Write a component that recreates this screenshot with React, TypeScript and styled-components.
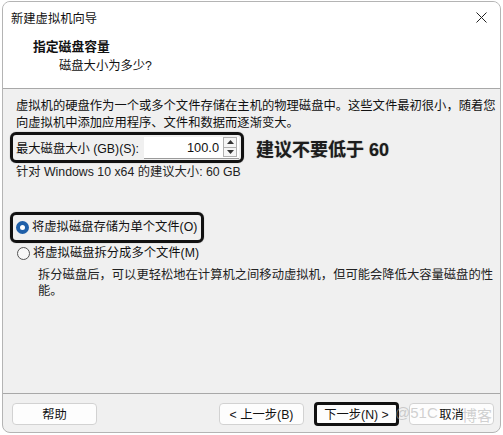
import styled, { createGlobalStyle } from 'styled-components';

const GlobalStyle = createGlobalStyle`
  html, body {
    margin: 0;
    padding: 0;
    background: #ffffff;
  }
  body {
    font-family: "Liberation Sans", "Noto Sans CJK SC", sans-serif;
    font-size: 12.3px;
    color: #111;
  }
`;

const Window = styled.div`
  box-sizing: border-box;
  width: 499px;
  height: 432px;
  margin: 1px 0 0 2px;
  border: 1px solid #b4b4b4;
  border-radius: 8px;
  overflow: hidden;
  display: flex;
  flex-direction: column;
  background: #f0f0f0;
  position: relative;
`;

const TitleBar = styled.div`
  height: 31px;
  flex: none;
  display: flex;
  align-items: center;
  justify-content: space-between;
  padding: 0 10px 0 8px;
  background: #fff;
`;

const CloseButton = styled.div`
  width: 12px;
  height: 12px;
  display: flex;
  align-items: center;
  justify-content: center;
  margin-right: 3px;
`;

const Header = styled.div`
  box-sizing: border-box;
  height: 56px;
  flex: none;
  background: #fff;
  border-bottom: 1px solid #a8a8a8;
  padding: 5px 0 0 30px;
`;

const Heading = styled.div`
  font-weight: bold;
  font-size: 12.8px;
  line-height: 18px;
`;

const SubHeading = styled.div`
  line-height: 18px;
  margin: 1px 0 0 26px;
`;

const Body = styled.div`
  flex: 1;
  padding: 9px 13px 0 13px;
  display: flex;
  flex-direction: column;
`;

const Paragraph = styled.div`
  line-height: 17px;
  white-space: nowrap;
`;

const Highlight = styled.div<{ $w: number; $h: number }>`
  box-sizing: border-box;
  width: ${p => p.$w}px;
  height: ${p => p.$h}px;
  border: 3px solid #111;
  border-radius: 6px;
  margin-left: -6px;
  display: flex;
  align-items: center;
  padding-left: 3px;
  box-shadow: 0 0 1px rgba(0, 0, 0, 0.5);
`;

const SizeRow = styled.div`
  display: flex;
  align-items: center;
`;

const FieldLabel = styled.span`
  width: 128px;
  flex: none;
`;

const SpinBox = styled.div`
  box-sizing: border-box;
  width: 95px;
  height: 22px;
  display: flex;
  align-items: center;
  background: #fff;
  border-bottom: 1px solid #9a9a9a;
`;

const SpinValue = styled.span`
  flex: 1;
  text-align: right;
  padding-right: 4px;
  font-size: 12.8px;
`;

const SpinButtons = styled.div`
  width: 14px;
  height: 20px;
  display: flex;
  flex-direction: column;
  margin-right: 2px;
`;

const SpinArrow = styled.div`
  box-sizing: border-box;
  flex: 1;
  border: 1px solid #b0b0b0;
  background: #f6f6f6;
  display: flex;
  align-items: center;
  justify-content: center;
  & + & {
    border-top: none;
  }
`;

const Advice = styled.span`
  margin-left: 12px;
  font-weight: bold;
  font-size: 18px;
  color: #1c1c1c;
  text-shadow: 0 0 1px rgba(0, 0, 0, 0.4);
`;

const Hint = styled.div`
  line-height: 17px;
  margin-top: 1px;
  color: #222;
`;

const RadioGroup = styled.div`
  margin-top: 31px;
  display: flex;
  flex-direction: column;
`;

const RadioLine = styled.div`
  display: flex;
  align-items: center;
  gap: 3px;
  line-height: 17px;
`;

const RadioCircle = styled.span<{ $checked?: boolean }>`
  box-sizing: border-box;
  width: 13px;
  height: 13px;
  border-radius: 50%;
  flex: none;
  background: ${p => (p.$checked ? '#fff' : '#f7f7f7')};
  border: ${p => (p.$checked ? '4px solid #1f5fa8' : '1px solid #555')};
`;

const PlainRadio = styled(RadioLine)`
  margin-top: 2px;
  padding-left: 1px;
`;

const Note = styled.div`
  margin: 5px 0 0 22px;
  line-height: 16px;
  white-space: nowrap;
  color: #222;
`;

const Footer = styled.div`
  box-sizing: border-box;
  height: 39px;
  flex: none;
  border-top: 1px solid #a8a8a8;
  display: flex;
  align-items: flex-start;
  padding: 9px 0 0 9px;
  position: relative;
`;

const Button = styled.div<{ $marked?: boolean }>`
  box-sizing: border-box;
  width: 85px;
  height: ${p => (p.$marked ? 24 : 22)}px;
  margin-top: ${p => (p.$marked ? -1 : 0)}px;
  display: flex;
  align-items: center;
  justify-content: center;
  background: #fdfdfd;
  border: ${p => (p.$marked ? '3px solid #111' : '1px solid #d2d2d2')};
  border-radius: 4px;
`;

const Spacer = styled.div`
  flex: 1;
`;

const ButtonGroup = styled.div`
  display: flex;
  gap: 10px;
  margin-right: 6px;
`;

const Watermark = styled.span<{ $left: number }>`
  position: absolute;
  left: ${p => p.$left}px;
  top: 10px;
  font-size: 15px;
  color: rgba(170, 170, 170, 0.55);
  pointer-events: none;
  white-space: nowrap;
`;

export default function App() {
  return (
    <>
      <GlobalStyle />
      <Window>
        <TitleBar>
          <span>新建虚拟机向导</span>
          <CloseButton>
            <svg width="11" height="11" viewBox="0 0 11 11">
              <path d="M0.5 0.5 L10.5 10.5 M10.5 0.5 L0.5 10.5" stroke="#222" strokeWidth="1" />
            </svg>
          </CloseButton>
        </TitleBar>
        <Header>
          <Heading>指定磁盘容量</Heading>
          <SubHeading>磁盘大小为多少?</SubHeading>
        </Header>
        <Body>
          <Paragraph>
            虚拟机的硬盘作为一个或多个文件存储在主机的物理磁盘中。这些文件最初很小，随着您
            <br />
            向虚拟机中添加应用程序、文件和数据而逐渐变大。
          </Paragraph>
          <SizeRow>
            <Highlight $w={234} $h={31}>
              <FieldLabel>最大磁盘大小 (GB)(S):</FieldLabel>
              <SpinBox>
                <SpinValue>100.0</SpinValue>
                <SpinButtons>
                  <SpinArrow>
                    <svg width="7" height="4" viewBox="0 0 7 4">
                      <path d="M0 4 L3.5 0 L7 4 Z" fill="#333" />
                    </svg>
                  </SpinArrow>
                  <SpinArrow>
                    <svg width="7" height="4" viewBox="0 0 7 4">
                      <path d="M0 0 L3.5 4 L7 0 Z" fill="#333" />
                    </svg>
                  </SpinArrow>
                </SpinButtons>
              </SpinBox>
            </Highlight>
            <Advice>建议不要低于 60</Advice>
          </SizeRow>
          <Hint>针对 Windows 10 x64 的建议大小: 60 GB</Hint>
          <RadioGroup>
            <Highlight $w={194} $h={31}>
              <RadioLine>
                <RadioCircle $checked />
                <span>将虚拟磁盘存储为单个文件(O)</span>
              </RadioLine>
            </Highlight>
            <PlainRadio>
              <RadioCircle />
              <span>将虚拟磁盘拆分成多个文件(M)</span>
            </PlainRadio>
            <Note>
              拆分磁盘后，可以更轻松地在计算机之间移动虚拟机，但可能会降低大容量磁盘的性
              <br />
              能。
            </Note>
          </RadioGroup>
        </Body>
        <Footer>
          <Button>帮助</Button>
          <Spacer />
          <ButtonGroup>
            <Button>&lt; 上一步(B)</Button>
            <Button $marked>下一步(N) &gt;</Button>
            <Button>取消</Button>
          </ButtonGroup>
          <Watermark $left={392}>@51C</Watermark>
          <Watermark $left={459}>博客</Watermark>
        </Footer>
      </Window>
    </>
  );
}
